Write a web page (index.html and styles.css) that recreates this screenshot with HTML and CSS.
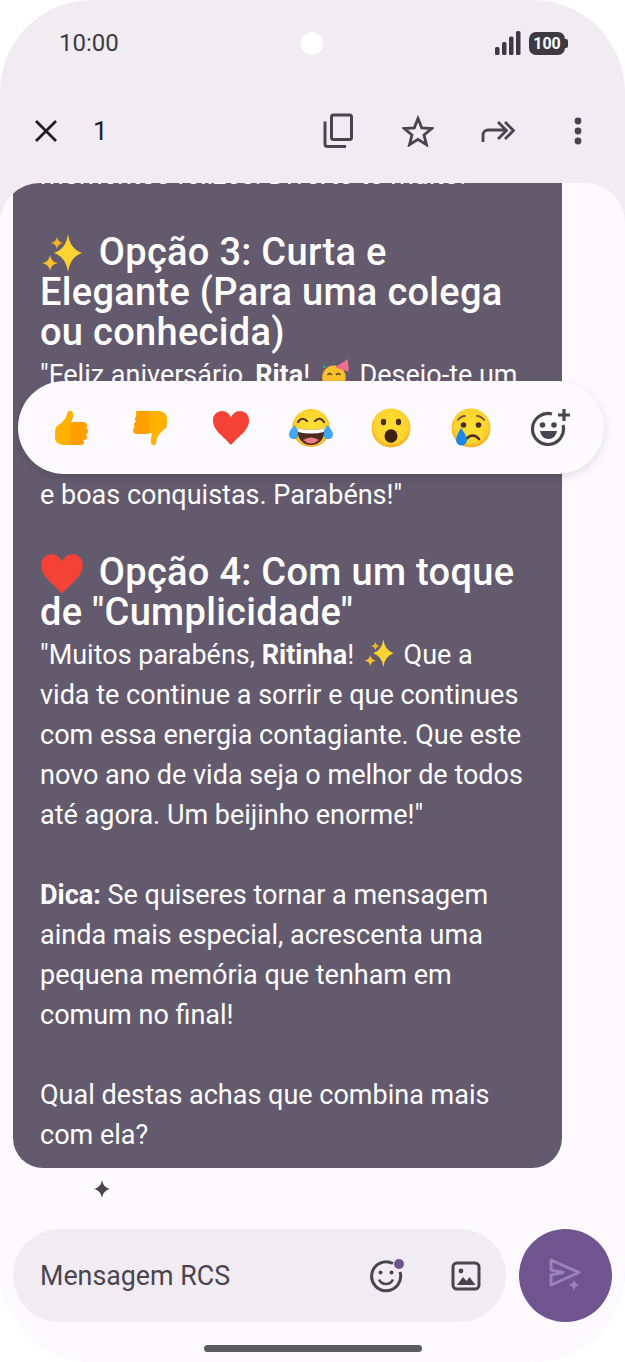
FILE: index.html
```html
<!DOCTYPE html>
<html>
<head>
  <title>Mensagens</title>
  <link rel="stylesheet" href="styles.css">
</head>
<body>
  <svg class="defs" width="0" height="0">
    <defs>
      <radialGradient id="faceFill" cx="50%" cy="45%" r="55%">
        <stop offset="0%" stop-color="#fee133"/>
        <stop offset="78%" stop-color="#fdd32e"/>
        <stop offset="100%" stop-color="#f7a823"/>
      </radialGradient>
      <symbol id="sparkles" viewBox="0 0 44 44">
        <path fill="#fbd431" d="M28 2Q30 17 42 21 30 25 28 40 26 25 14 21 26 17 28 2z"/>
        <path fill="#f5b31f" d="M17 5Q18 10 23 11 18 12 17 17 16 12 11 11 16 10 17 5z"/>
        <path fill="#fbc02d" d="M10 23Q11 30 18 31 11 32 10 39 9 32 2 31 9 30 10 23z"/>
      </symbol>
      <symbol id="heart" viewBox="0 0 40 40">
        <path fill="#f44336" d="M20 38C14 30 1 23 1 12 1 6 5.500 2 10.500 2 15 2 18.500 5 20 9 21.500 5 25 2 29.500 2 34.500 2 39 6 39 12 39 23 26 30 20 38z"/>
      </symbol>
    </defs>
  </svg>

  <div class="phone">
    <div class="status-bar">
      <span class="clock">10:00</span>
      <div class="camera"></div>
      <div class="status-icons">
        <svg width="26" height="24" viewBox="0 0 26 24"><rect x="0" y="16" width="4.500" height="8" rx="1.500"/><rect x="7" y="11" width="4.500" height="13" rx="1.500"/><rect x="14" y="5.500" width="4.500" height="18.500" rx="1.500"/><rect x="21" y="0" width="4.500" height="24" rx="1.500"/></svg>
        <div class="battery"><span>100</span></div>
      </div>
    </div>

    <div class="toolbar">
      <svg class="close-icon" width="26" height="26" viewBox="0 0 26 26"><path d="M3 3l20 20M23 3L3 23" fill="none" stroke="#1f1d22" stroke-width="2.800"/></svg>
      <span class="count">1</span>
      <div class="toolbar-actions">
        <svg width="32" height="36" viewBox="0 0 32 36" fill="none" stroke="#49454f" stroke-width="3"><rect x="9.500" y="2" width="20" height="24.500" rx="2"/><path d="M3 8.500V31a2.500 2.500 0 0 0 2.500 2.500H24"/></svg>
        <svg width="32" height="32" viewBox="0 0 32 32" fill="none" stroke="#49454f" stroke-width="2.800"><path d="M16 3.500l3.700 9.300 10 .7-7.700 6.400 2.500 9.800L16 24.300l-8.500 5.400 2.500-9.800-7.700-6.400 10-.7z"/></svg>
        <svg width="34" height="26" viewBox="0 0 34 26" fill="none" stroke="#49454f" stroke-width="2.800"><path d="M2 24v-7a5 5 0 0 1 5-5h17M17 4l8.500 8.500L17 21M24 4l8.500 8.500L24 21"/></svg>
        <svg width="8" height="28" viewBox="0 0 8 28" fill="#49454f"><circle cx="4" cy="4" r="3.400"/><circle cx="4" cy="14" r="3.400"/><circle cx="4" cy="24" r="3.400"/></svg>
      </div>
    </div>

    <div class="conversation">
      <div class="messages">
        <div class="bubble">
          <p>momentos felizes. Diverte-te muito!"</p>
          <p>&nbsp;</p>
          <h3><svg class="emoji-head"><use href="#sparkles"/></svg> Opção 3: Curta e Elegante (Para uma colega ou conhecida)</h3>
          <p>"Feliz aniversário, <b>Rita</b>! <svg class="emoji-text" viewBox="0 0 30 30"><circle cx="14" cy="18" r="11" fill="#fbc02d"/><path d="M15 9L27 1l1 12z" fill="#ef6c8a"/><circle cx="5" cy="8" r="1.500" fill="#26a69a"/><circle cx="27" cy="22" r="1.500" fill="#ab47bc"/><path d="M8 16q2-3 4 0M16 16q2-3 4 0" fill="none" stroke="#5d4037" stroke-width="1.500"/><path d="M11 22q3 3 6 0" fill="none" stroke="#5d4037" stroke-width="1.500"/></svg> Desejo-te um<br>dia muito especial, cheio de saúde,<br>muitos momentos felizes, sucessos<br>e boas conquistas. Parabéns!"</p>
          <p>&nbsp;</p>
          <h3><svg class="emoji-head"><use href="#heart"/></svg> Opção 4: Com um toque de "Cumplicidade"</h3>
          <p>"Muitos parabéns, <b>Ritinha</b>! <svg class="emoji-text"><use href="#sparkles"/></svg> Que a<br>vida te continue a sorrir e que continues com essa energia contagiante. Que este novo ano de vida seja o melhor de todos até agora. Um beijinho enorme!"</p>
          <p>&nbsp;</p>
          <p><b>Dica:</b> Se quiseres tornar a mensagem ainda mais especial, acrescenta uma pequena memória que tenham em comum no final!</p>
          <p>&nbsp;</p>
          <p>Qual destas achas que combina mais com ela?</p>
        </div>
        <svg class="ai-mark" width="18" height="18" viewBox="0 0 18 18"><path fill="#49454f" d="M9 0c1 5 3 7.500 8 9-5 1.500-7 4-8 9-1-5-3-7.500-8-9 5-1.500 7-4 8-9z"/></svg>
      </div>

      <div class="reactions">
        <svg width="36" height="36" viewBox="0 0 36 36">
          <path fill="#ffb300" d="M3 17c4-3 8-6 10-10 1-3 1-5 3-6 3-1 5 2 4 6l-2 6h6v22H12C6 35 2 33 2 27c0-4 0-8 1-10z"/>
          <g fill="#ffa000"><rect x="17" y="12" width="17" height="7" rx="3.500"/><rect x="17" y="18" width="18" height="6.500" rx="3.200"/><rect x="17" y="24" width="17" height="6" rx="3"/><rect x="17" y="29.500" width="14" height="5.500" rx="2.700"/></g>
        </svg>
        <svg width="36" height="36" viewBox="0 0 36 36">
          <path fill="#ffb300" d="M33 18c-4 3-7 6-9 10-1 3 0 5-2 7-3 1-5-2-4-6l1-6H3V1h21c6 0 10 2 10 8 0 4 0 7-1 9z"/>
          <g fill="#ffa000" transform="translate(36 36) rotate(180)"><rect x="19" y="12" width="17" height="7" rx="3.500"/><rect x="19" y="18" width="16" height="6.500" rx="3.200"/><rect x="19" y="24" width="15" height="6" rx="3"/><rect x="19" y="29.500" width="13" height="5.500" rx="2.700"/></g>
        </svg>
        <svg width="38" height="38"><use href="#heart"/></svg>
        <svg width="44" height="40" viewBox="0 0 44 40">
          <circle cx="22" cy="20" r="19" fill="url(#faceFill)"/>
          <path d="M9 14q4-6 9-1M26 13q5-5 9 1" fill="none" stroke="#4e342e" stroke-width="2.200" stroke-linecap="round"/>
          <path d="M8 20q14 4 28 0c0 11-6 17-14 17S8 31 8 20z" fill="#4e2c1f"/>
          <path d="M8 20q14 4 28 0l-1 4q-13 3-26 0z" fill="#fff"/>
          <path d="M14 32q8-5 16 0-8 7-16 0z" fill="#ef7a85"/>
          <path d="M6 17c-3 3-6 6-6 10a5 5 0 0 0 9 2c1-3-1-8-3-12zM38 17c3 3 6 6 6 10a5 5 0 0 1-9 2c-1-3 1-8 3-12z" fill="#42a5f5"/>
        </svg>
        <svg width="40" height="40" viewBox="0 0 40 40">
          <circle cx="20" cy="20" r="19.500" fill="url(#faceFill)"/>
          <ellipse cx="12.500" cy="14" rx="2.700" ry="3.200" fill="#4e2c1f"/><ellipse cx="27.500" cy="14" rx="2.700" ry="3.200" fill="#4e2c1f"/>
          <ellipse cx="20" cy="28" rx="6.500" ry="6.800" fill="#3e2113"/>
        </svg>
        <svg width="40" height="40" viewBox="0 0 40 40">
          <circle cx="20" cy="20" r="19.500" fill="url(#faceFill)"/>
          <circle cx="12.500" cy="17" r="2.800" fill="#4e2c1f"/><circle cx="27.500" cy="17" r="2.800" fill="#4e2c1f"/>
          <path d="M7 12q3-4 7-4M33 12q-3-4-7-4" fill="none" stroke="#795548" stroke-width="1.800" stroke-linecap="round"/>
          <path d="M15 31q7-7 13 0" fill="none" stroke="#4e2c1f" stroke-width="2.600" stroke-linecap="round"/>
          <path d="M10 20c-3 5-5 9-5 12a5 5 0 0 0 11 0c0-3-3-8-6-12z" fill="#1e88e5"/>
        </svg>
        <svg width="40" height="37" viewBox="0 0 40 37" fill="none" stroke="#49454f" stroke-width="3.200">
          <path d="M32 16a15.500 15.500 0 1 1-11-11"/>
          <circle cx="11.500" cy="16" r="2.800" fill="#49454f" stroke="none"/><circle cx="23" cy="16" r="2.800" fill="#49454f" stroke="none"/>
          <path d="M9 22h17c-1 5-4 8-8.500 8S10 27 9 22z" fill="#49454f" stroke="none"/>
          <path d="M33 0v12M27 6h12"/>
        </svg>
      </div>

      <div class="composer">
        <div class="input-box">
          <span class="placeholder">Mensagem RCS</span>
          <div class="input-icons">
            <div class="emoji-button">
              <svg width="34" height="34" viewBox="0 0 34 34" fill="none" stroke="#49454f" stroke-width="3"><path d="M24 4.500A14.500 14.500 0 1 0 31 13"/><circle cx="11.500" cy="13.500" r="2" fill="#49454f" stroke="none"/><circle cx="22.500" cy="13.500" r="2" fill="#49454f" stroke="none"/><path d="M10 20.500c1.500 3 4 4.500 7 4.500s5.500-1.500 7-4.500" stroke-width="2.600"/></svg>
              <span class="dot"></span>
            </div>
            <svg width="30" height="30" viewBox="0 0 30 30" fill="none" stroke="#49454f" stroke-width="3"><rect x="2" y="2" width="26" height="26" rx="4"/><circle cx="10" cy="10" r="2.400" fill="#49454f" stroke="none"/><path d="M6 24l6-8 3.500 4 3-4 6 8z" fill="#49454f" stroke="none"/></svg>
          </div>
        </div>
        <div class="send-button">
          <svg width="36" height="38" viewBox="0 0 36 38"><path d="M3 3l28 12.500L3 28V18l12-2.500L3 13z" fill="none" stroke="#9a83b8" stroke-width="3" stroke-linejoin="round"/><path d="M26 22c.7 3.500 2 5 5.500 6-3.500 1-4.800 2.500-5.500 6-.7-3.500-2-5-5.500-6 3.500-1 4.800-2.500 5.500-6z" fill="#9a83b8"/></svg>
        </div>
      </div>
      <div class="home-row"><div class="home-bar"></div></div>
    </div>
  </div>
</body>
</html>
```
FILE: styles.css
```css
body {
  margin: 0;
  background-color: #fff;
  font-family: Roboto, "Noto Sans", sans-serif;
}
.defs {
  position: absolute;
}
.phone {
  position: relative;
  width: 625px;
  height: 1362px;
  overflow: hidden;
  display: flex;
  flex-direction: column;
  background-color: #f1ecf2;
  border-radius: 92px;
}
.status-bar {
  height: 88px;
  display: flex;
  align-items: center;
  justify-content: space-between;
  padding: 0 60px 2px 59px;
  box-sizing: border-box;
  position: relative;
  color: #3d3a42;
}
.clock {
  font-size: 24px;
}
.camera {
  position: absolute;
  left: 301px;
  top: 32px;
  width: 22px;
  height: 23px;
  border-radius: 50%;
  background-color: #fff;
}
.status-icons {
  display: flex;
  align-items: center;
  gap: 8px;
}
.status-icons svg {
  fill: #3d3a42;
}
.battery {
  position: relative;
  width: 36px;
  height: 23px;
  border-radius: 7px;
  background-color: #3d3a42;
  color: #fff;
  font-size: 16px;
  font-weight: 700;
  line-height: 23px;
  text-align: center;
}
.battery:after {
  content: "";
  position: absolute;
  right: -3px;
  top: 7px;
  width: 3px;
  height: 9px;
  border-radius: 0 2px 2px 0;
  background-color: #3d3a42;
}
.toolbar {
  height: 95px;
  display: flex;
  align-items: center;
  padding: 0 27px 10px 33px;
  box-sizing: border-box;
}
.count {
  font-size: 26px;
  color: #1f1d22;
  margin-left: 34px;
}
.toolbar-actions {
  margin-left: auto;
  display: grid;
  grid-template-columns: repeat(4, 40px);
  column-gap: 40px;
  justify-items: center;
  align-items: center;
}
.conversation {
  flex: 1;
  min-height: 0;
  display: flex;
  flex-direction: column;
  position: relative;
  background-color: #fcf9ff;
  border-radius: 40px 40px 0 0;
  overflow: hidden;
}
.messages {
  flex: 1;
  min-height: 0;
  display: flex;
  flex-direction: column;
  justify-content: flex-end;
  padding: 0 0 31px 13px;
  overflow: hidden;
}
.bubble {
  flex-shrink: 0;
  width: 549px;
  box-sizing: border-box;
  padding: 0 27px 13px;
  background-color: #645a6e;
  border-radius: 0 0 30px 30px;
  color: #fff;
  font-size: 27px;
  line-height: 40px;
}
.bubble p {
  margin: 0;
}
.bubble b {
  font-weight: 700;
}
.bubble h3 {
  margin: -3px 0 0;
  padding-bottom: 3px;
  font-size: 38px;
  font-weight: 500;
  letter-spacing: 0.3px;
  line-height: 40px;
}
.emoji-head {
  width: 44px;
  height: 44px;
  margin: -4px 5px -4px 0;
  vertical-align: -7px;
}
.emoji-text {
  width: 32px;
  height: 32px;
  margin: 0 2px;
  vertical-align: -6px;
}
.ai-mark {
  flex-shrink: 0;
  margin: 12px 0 0 80px;
}
.reactions {
  position: absolute;
  left: 18px;
  top: 198px;
  width: 586px;
  height: 93px;
  box-sizing: border-box;
  padding: 0 33px;
  display: grid;
  grid-template-columns: repeat(7, 40px);
  justify-content: space-between;
  justify-items: center;
  align-items: center;
  background-color: #fdfaff;
  border-radius: 47px;
  box-shadow: 0 3px 10px rgba(0, 0, 0, 0.12);
}
.composer {
  display: flex;
  gap: 13px;
  padding: 0 13px;
}
.input-box {
  flex: 1;
  height: 93px;
  display: flex;
  align-items: center;
  justify-content: space-between;
  padding: 0 25px 0 27px;
  background-color: #f1ecf2;
  border-radius: 47px;
}
.placeholder {
  font-size: 26.800px;
  color: #49454f;
}
.input-icons {
  display: flex;
  align-items: center;
  gap: 48px;
}
.emoji-button {
  position: relative;
  display: flex;
}
.dot {
  position: absolute;
  right: -1px;
  top: 0;
  width: 10px;
  height: 10px;
  border-radius: 50%;
  background-color: #6f5490;
}
.send-button {
  width: 93px;
  height: 93px;
  border-radius: 50%;
  background-color: #6f5490;
  display: flex;
  align-items: center;
  justify-content: center;
}
.home-row {
  height: 40px;
  display: flex;
  justify-content: center;
  padding-top: 23px;
  box-sizing: border-box;
}
.home-bar {
  width: 218px;
  height: 7px;
  border-radius: 4px;
  background-color: #5b5a5e;
}
```
